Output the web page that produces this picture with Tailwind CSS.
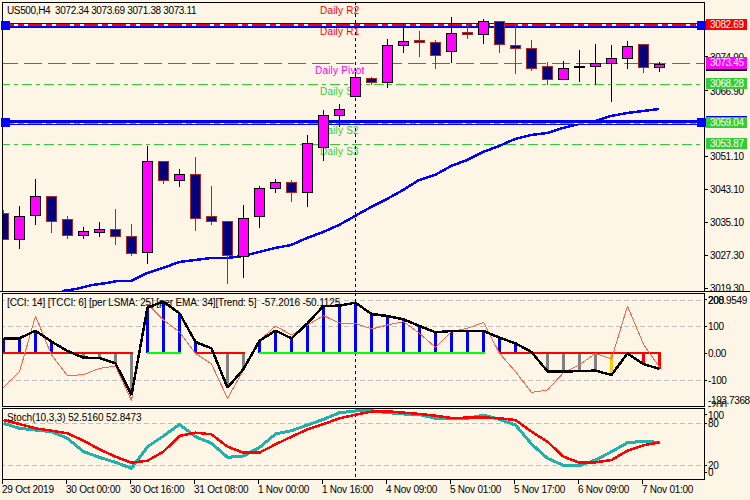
<!DOCTYPE html>
<html lang="en">
<head>
  <meta charset="UTF-8" />
  <title>US500,H4</title>
  <script src="https://cdn.jsdelivr.net/npm/@tailwindcss/browser@4"></script>
</head>
<body class="bg-[#fdf5e6]">
  <div class="w-[750px] h-[500px] overflow-hidden pt-[2px] bg-[#fdf5e6] text-black text-[10px] leading-[10px] tracking-[-0.36px] font-['Liberation_Sans',sans-serif]">

    <!-- price pane -->
    <div class="relative flex h-[290px] border-b border-black">
      <div class="w-[2px]"></div>
      <div class="relative w-[703px] h-[290px] border border-black overflow-hidden">
        <svg id="price" class="absolute left-[-3px] top-[-1px] tracking-[0.2px]" width="750" height="290" viewBox="0 2 750 290"></svg>
        <span class="absolute left-[4px] top-[3px] whitespace-pre">US500,H4  3072.34 3073.69 3071.38 3073.11</span>
      </div>
      <div class="relative flex-1 h-[289px]">
        <i class="absolute left-0 top-[54px] w-[3px] h-px bg-black"></i>
        <i class="absolute left-0 top-[88px] w-[3px] h-px bg-black"></i>
        <i class="absolute left-0 top-[154px] w-[3px] h-px bg-black"></i>
        <i class="absolute left-0 top-[187px] w-[3px] h-px bg-black"></i>
        <i class="absolute left-0 top-[220px] w-[3px] h-px bg-black"></i>
        <i class="absolute left-0 top-[253px] w-[3px] h-px bg-black"></i>
        <i class="absolute left-0 top-[286px] w-[3px] h-px bg-black"></i>
        <span class="absolute left-[5px] top-[51px]">3074.90</span>
        <span class="absolute left-[5px] top-[85px]">3066.90</span>
        <span class="absolute left-[5px] top-[150px]">3051.10</span>
        <span class="absolute left-[5px] top-[183px]">3043.10</span>
        <span class="absolute left-[5px] top-[216px]">3035.10</span>
        <span class="absolute left-[5px] top-[249px]">3027.30</span>
        <span class="absolute left-[5px] top-[282px]">3019.30</span>
        <div class="absolute left-[1px] top-[17px] w-[41px] h-[11px] pl-[4px] pt-px bg-[#ff0000] text-white">3082.69</div>
        <div class="absolute left-[1px] top-[56px] w-[41px] h-[13px] bg-black"></div>
        <div class="absolute left-[1px] top-[55px] w-[41px] h-[12px] pl-[4px] pt-px bg-[#ff00ff] text-white">3073.45</div>
        <div class="absolute left-[1px] top-[76px] w-[41px] h-[11px] pl-[4px] pt-px bg-[#32cd32] text-white">3068.28</div>
        <div class="absolute left-[1px] top-[114px] w-[41px] h-[1px] bg-[#0000ff]"></div>
        <div class="absolute left-[1px] top-[115px] w-[41px] h-[11px] pl-[4px] pt-px bg-[#32cd32] text-white">3059.04</div>
        <div class="absolute left-[1px] top-[136px] w-[41px] h-[11px] pl-[4px] pt-px bg-[#32cd32] text-white">3053.87</div>
      </div>
      <!-- line handles -->
      <i class="absolute left-[1px] top-[19px] w-[9px] h-[9px] bg-[#0000ff]"></i>
      <i class="absolute left-[697px] top-[19px] w-[9px] h-[9px] bg-[#0000ff]"></i>
      <i class="absolute left-[1px] top-[116px] w-[9px] h-[9px] bg-[#0000ff]"></i>
      <i class="absolute left-[697px] top-[116px] w-[9px] h-[9px] bg-[#0000ff]"></i>
    </div>

    <!-- CCI pane -->
    <div class="flex h-[114px] mt-px">
      <div class="w-[2px]"></div>
      <div class="relative w-[703px] h-[114px] border border-black overflow-hidden">
        <svg id="cci" class="absolute left-[-3px] top-[-1px]" width="750" height="114" viewBox="0 293 750 114"></svg>
        <span class="absolute left-[4px] top-[4px] whitespace-pre tracking-[-0.15px]">[CCI: 14] [TCCI: 6] [per LSMA: 25] [per EMA: 34][Trend: 5]  -57.2016 -50.1125</span>
      </div>
      <div class="relative flex-1 h-[114px] overflow-hidden">
        <i class="absolute left-0 top-[6px] w-[2px] h-px bg-black"></i>
        <i class="absolute left-0 top-[33px] w-[2px] h-px bg-black"></i>
        <i class="absolute left-0 top-[60px] w-[2px] h-px bg-black"></i>
        <i class="absolute left-0 top-[87px] w-[2px] h-px bg-black"></i>
        <span class="absolute left-[3px] top-[3px]">200</span>
        <span class="absolute left-[3px] top-[3px]">208.9549</span>
        <span class="absolute left-[3px] top-[29px]">100</span>
        <span class="absolute left-[3px] top-[56px]">0.00</span>
        <span class="absolute left-[3px] top-[83px]">-100</span>
        <span class="absolute left-[3px] top-[103px]">-193.7368</span>
        <span class="absolute left-[3px] top-[108px]">-200</span>
      </div>
    </div>

    <!-- Stochastic pane -->
    <div class="flex h-[72px] mt-px">
      <div class="w-[2px]"></div>
      <div class="relative w-[703px] h-[72px] border border-black overflow-hidden">
        <svg id="stoch" class="absolute left-[-3px] top-[-1px]" width="750" height="72" viewBox="0 408 750 72"></svg>
        <span class="absolute left-[4px] top-[4px] whitespace-pre tracking-[-0.12px]">Stoch(10,3,3) 52.5160 52.8473</span>
      </div>
      <div class="relative flex-1 h-[72px] overflow-hidden">
        <i class="absolute left-0 top-[6px] w-[2px] h-px bg-black"></i>
        <i class="absolute left-0 top-[15px] w-[2px] h-px bg-black"></i>
        <i class="absolute left-0 top-[57px] w-[2px] h-px bg-black"></i>
        <i class="absolute left-0 top-[64px] w-[2px] h-px bg-black"></i>
        <span class="absolute left-[3px] top-[3px]">100</span>
        <span class="absolute left-[3px] top-[11px]">80</span>
        <span class="absolute left-[3px] top-[53px]">20</span>
        <span class="absolute left-[3px] top-[60px]">0</span>
      </div>
    </div>

    <!-- time axis -->
    <div class="flex pl-[2px] pt-[3px] tracking-[-0.25px]">
      <div class="relative w-[64px] pt-[2px]"><i class="absolute left-0 top-[-3px] w-px h-[4px] bg-black"></i>29 Oct 2019</div>
      <div class="relative w-[64px] pt-[2px]"><i class="absolute left-0 top-[-3px] w-px h-[4px] bg-black"></i>30 Oct 00:00</div>
      <div class="relative w-[64px] pt-[2px]"><i class="absolute left-0 top-[-3px] w-px h-[4px] bg-black"></i>30 Oct 16:00</div>
      <div class="relative w-[64px] pt-[2px]"><i class="absolute left-0 top-[-3px] w-px h-[4px] bg-black"></i>31 Oct 08:00</div>
      <div class="relative w-[64px] pt-[2px]"><i class="absolute left-0 top-[-3px] w-px h-[4px] bg-black"></i>1 Nov 00:00</div>
      <div class="relative w-[64px] pt-[2px]"><i class="absolute left-0 top-[-3px] w-px h-[4px] bg-black"></i>1 Nov 16:00</div>
      <div class="relative w-[64px] pt-[2px]"><i class="absolute left-0 top-[-3px] w-px h-[4px] bg-black"></i>4 Nov 09:00</div>
      <div class="relative w-[64px] pt-[2px]"><i class="absolute left-0 top-[-3px] w-px h-[4px] bg-black"></i>5 Nov 01:00</div>
      <div class="relative w-[64px] pt-[2px]"><i class="absolute left-0 top-[-3px] w-px h-[4px] bg-black"></i>5 Nov 17:00</div>
      <div class="relative w-[64px] pt-[2px]"><i class="absolute left-0 top-[-3px] w-px h-[4px] bg-black"></i>6 Nov 09:00</div>
      <div class="relative w-[64px] pt-[2px]"><i class="absolute left-0 top-[-3px] w-px h-[4px] bg-black"></i>7 Nov 01:00</div>
    </div>
  </div>

  <script>
    const BLUE = "#0000ff", GREEN = "#32cd32", BROWN = "#a52a2a", NAVY = "#000080";
    const X = i => 3.5 + 16 * i;

    const hline = (y, color, w, dash) =>
      `<line x1="0" x2="750" y1="${y}" y2="${y}" stroke="${color}" stroke-width="${w}" ${dash ? `stroke-dasharray="${dash}"` : ""} shape-rendering="crispEdges"/>`;
    const poly = (pts, color, w) =>
      `<polyline points="${pts.map(p => p.join(",")).join(" ")}" fill="none" stroke="${color}" stroke-width="${w}" stroke-linejoin="bevel" shape-rendering="crispEdges"/>`;
    const cross = (y1, y2) =>
      `<line x1="355.5" x2="355.5" y1="${y1}" y2="${y2}" stroke="#000" stroke-dasharray="3 3" shape-rendering="crispEdges"/>`;
    const label = (x, y, color, s) => `<text x="${x}" y="${y}" fill="${color}" font-size="10">${s}</text>`;
    // values per bar, starting at bar i0
    const series = (vals, i0 = 0) => vals.map((v, i) => [X(i + i0), v]);

    // body top, body bottom, wick top, wick bottom, down bar?
    const candles = [
      [213,239,210,240,1],[216,239,206,249,0],[196,215,179,225,0],[196,221,196,233,1],[219,235,216,239,1],
      [231,235,227,239,0],[229,232,222,237,0],[229,236,209,245,1],[236,253,224,256,1],[161,252,146,264,0],
      [161,180,161,184,1],[174,180,169,187,0],[174,218,157,231,1],[216,221,186,225,1],[221,255,221,284,1],
      [218,256,205,278,0],[188,216,186,228,0],[182,188,179,193,0],[182,192,180,202,1],[143,192,135,207,0],
      [115,147,110,161,0],[109,115,104,127,0],[77,96,72,96,0],[78,82,77,85,1],[45,82,39,88,0],
      [41,45,23,53,0],[40,42,31,57,1],[42,55,40,69,1],[33,51,17,63,0],[32,34,24,39,1],
      [21,34,19,44,0],[21,44,21,53,1],[45,48,23,74,1],[48,68,40,71,1],[66,79,62,85,1],
      [68,79,61,79,0],[66,67,50,82,0],[63,66,44,85,0],[58,63,45,102,0],[46,58,41,69,0],
      [44,67,44,73,1],[64,67,62,72,0]
    ];
    const candleSvg = candles.map(([t, b, wt, wb, down], i) => {
      const x = X(i), line = down ? BROWN : "#000", fill = down ? NAVY : "#ff00ff";
      return `<line x1="${x}" x2="${x}" y1="${wt}" y2="${wb}" stroke="${line}" shape-rendering="crispEdges"/>` +
        `<rect x="${x - 5}" y="${t + .5}" width="10" height="${b - t}" fill="${fill}" stroke="${line}" shape-rendering="crispEdges"/>`;
    }).join("");

    const ma = [[62,291],[76,289],[92,285],[107,283],[117,281],[131,281],[147,273],[163,268],[179,262],[195,260],
      [211,258],[227,258],[243,256],[259,252],[275,248],[291,245],[307,238],[323,232],[339,225],[355,216],[371,207],
      [387,199],[403,190],[419,180],[435,175],[451,166],[467,160],[483,152],[499,146],[515,139],[531,135],[547,133],
      [563,128],[579,124],[595,121],[611,116],[627,113],[643,111],[659,109]];

    document.getElementById("price").innerHTML =
      hline(63.5, "#ff00ff", 1, "18 6") +
      hline(84.5, GREEN, 1, "10 4 4 4") +
      hline(144.5, GREEN, 1, "10 4 4 4") +
      label(320, 14, "#ff0000", "Daily R2") +
      label(320, 35, "#ff0000", "Daily R1") +
      label(315, 74, "#ff00ff", "Daily Pivot") +
      label(320, 95, GREEN, "Daily S1") +
      label(320, 134, GREEN, "Daily S2") +
      label(320, 155, GREEN, "Daily S3") +
      cross(2, 292) +
      poly(ma, BLUE, 2.5) +
      hline(23.5, BLUE, 1) + hline(25, "#ffffff", 2) + hline(25, "#ff0000", 2, "14 4 6 4") + hline(27, BLUE, 2) +
      hline(121, BLUE, 3) + hline(123.5, "#ffffff", 1) + hline(123.5, GREEN, 1, "14 4 6 4") + hline(124.5, BLUE, 1) +
      candleSvg;

    const cciLine = [145,145,122,155,183,203,204,220,315,52,35,70,156,175,293,237,152,122,145,100,48,47,38,72,
      78,88,108,127,123,123,123,143,160,186,244,245,243,242,255,190,222,237].map(z => 290 + z / 3);
    const tcciLine = [293,245,78,195,257,254,235,228,332,42,90,126,190,222,325,240,152,108,135,105,77,99,100,117,
      105,95,130,172,125,115,97,190,245,307,300,248,225,190,207,48,163,232].map(z => 290 + z / 3);
    const barColor = i => {
      if (i === 38) return "#ffcc00";
      if (i >= 40) return "#ff0000";
      if ((i >= 5 && i <= 8) || (i >= 14 && i <= 15) || (i >= 34 && i <= 37)) return "#808080";
      if (i === 4 || i === 13 || i === 33 || i === 39) return null;
      return BLUE;
    };
    const bars = cciLine.map((y, i) => {
      const c = barColor(i);
      return c ? `<line x1="${X(i)}" x2="${X(i)}" y1="353" y2="${y}" stroke="${c}" stroke-width="3" shape-rendering="crispEdges"/>` : "";
    }).join("");
    const base = (a, b, c) => `<line x1="${X(a) - 1}" x2="${X(b) + 1}" y1="353" y2="353" stroke="${c}" stroke-width="2" shape-rendering="crispEdges"/>`;

    document.getElementById("cci").innerHTML =
      hline(300.5, "#c0c0c0", 1, "5 3") + hline(326.5, "#c0c0c0", 1, "5 3") + hline(380.5, "#c0c0c0", 1, "5 3") +
      cross(293, 407) + bars +
      base(0, 8, "#ff0000") + base(9, 11, "#00ff00") + base(12, 15, "#ff0000") + base(16, 30, "#00ff00") + base(31, 41, "#ff0000") +
      poly(series(tcciLine), "#ff6347", 1) +
      poly(series(cciLine), "#000", 2.5);

    const teal = [70,85,90,95,115,155,172,187,205,140,108,73,110,130,172,168,142,102,92,75,58,38,33,32,
      38,42,44,55,55,55,45,58,75,132,175,196,197,180,155,128,124,127].map(z => 400 + z / 3);
    const red = [60,72,85,92,100,122,148,170,188,182,155,108,98,103,140,158,158,133,110,88,72,55,44,35,
      34,38,42,47,54,53,52,55,60,95,125,170,188,187,180,152,136,127].map(z => 400 + z / 3);

    document.getElementById("stoch").innerHTML =
      hline(423.5, "#c0c0c0", 1, "5 3") + hline(465.5, "#c0c0c0", 1, "5 3") +
      cross(408, 480) +
      poly(series(teal), "#20b2aa", 3) +
      poly(series(red), "#ff0000", 2.5);
  </script>
</body>
</html>
